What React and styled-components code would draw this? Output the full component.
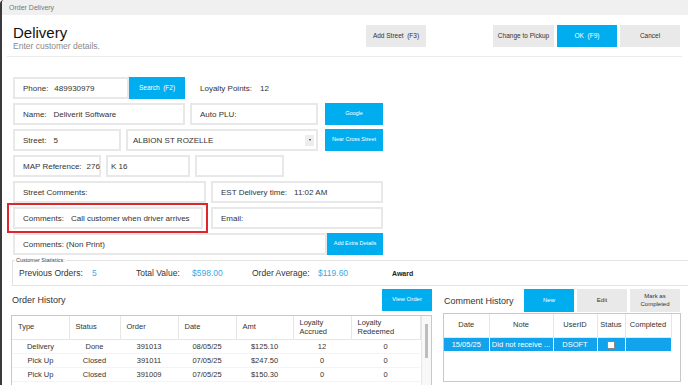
import React from 'react';
import styled, { createGlobalStyle } from 'styled-components';

const BLUE = '#00aeef';

const Global = createGlobalStyle`
  html, body { margin: 0; padding: 0; background: #fff; overflow: hidden; }
  body { font-family: "Liberation Sans", Arial, sans-serif; color: #333; }
  #root { width: 688px; height: 385px; overflow: hidden; }
`;

const Window = styled.div`
  width: 688px;
  height: 385px;
  box-sizing: border-box;
  border-left: 2px solid #3a3a3a;
  border-top-left-radius: 4px;
  overflow: hidden;
  display: flex;
  flex-direction: column;
  background: #fff;
`;

const TitleBar = styled.div`
  height: 15px;
  flex: none;
  background: #f0f0f0;
  padding-left: 7px;
  font-size: 7px;
  line-height: 15px;
  color: #777;
`;

const Header = styled.div`
  box-sizing: border-box;
  height: 42px;
  flex: none;
  margin: 0 6px 0 5px;
  padding: 10px 2px 0 6px;
  border-bottom: 1px solid #ececec;
  display: flex;
  align-items: flex-start;
`;

const TitleBlock = styled.div`
  flex: 1;
`;

const Heading = styled.div`
  font-size: 15px;
  line-height: 15px;
  color: #111;
`;

const Sub = styled.div`
  margin-top: 1px;
  font-size: 8.5px;
  line-height: 10px;
  color: #8a8a8a;
`;

const ButtonGroup = styled.div`
  display: flex;
  gap: ${p => p.$gap ?? 3}px;
  margin-right: ${p => p.$mr || 0}px;
`;

const Btn = styled.button`
  box-sizing: border-box;
  width: ${p => p.$w}px;
  height: ${p => p.$h || 22}px;
  flex: none;
  border: none;
  margin: 0;
  padding: 0 2px;
  font-family: inherit;
  font-size: ${p => p.$fs || 6.5}px;
  line-height: 1.3;
  background: ${p => (p.$blue ? BLUE : '#e9e9e9')};
  color: ${p => (p.$blue ? '#fff' : '#333')};
`;

const Body = styled.div`
  padding: 20px 0 0 11px;
  display: flex;
  flex-direction: column;
`;

const Form = styled.div`
  display: flex;
  flex-direction: column;
  gap: 4px;
`;

const Row = styled.div`
  display: flex;
  align-items: center;
  height: 22px;
  gap: ${p => p.$gap ?? 5}px;
`;

const Field = styled.div`
  box-sizing: border-box;
  width: ${p => p.$w}px;
  height: 22px;
  flex: none;
  border: 2px solid #e8e8e8;
  display: flex;
  align-items: center;
  padding-left: ${p => p.$pl ?? 8}px;
  padding-right: 2px;
  font-size: 8px;
  color: #333;
  white-space: nowrap;
  background: #fff;
`;

const Value = styled.span`
  margin-left: ${p => p.$ml ?? 6}px;
`;

const Arrow = styled.div`
  margin-left: auto;
  width: 9px;
  height: 11px;
  background: #ededed;
  display: flex;
  align-items: center;
  justify-content: center;
  &::after {
    content: '';
    border-left: 1.5px solid transparent;
    border-right: 1.5px solid transparent;
    border-top: 2px solid #333;
  }
`;

const Loyalty = styled.div`
  margin-left: 15px;
  font-size: 8px;
`;

const RedFrame = styled.div`
  box-sizing: border-box;
  width: 201px;
  height: 30px;
  margin: -4px 0 -4px -6px;
  border: 2px solid #e0262a;
  display: flex;
  align-items: center;
  padding-left: 4px;
`;

const Stats = styled.fieldset`
  margin: 2px -20px 0 -1px;
  padding: 3px 0 5px 6px;
  border: 1px solid #e3e3e3;
  min-width: 0;
`;

const Legend = styled.legend`
  font-size: 5.5px;
  line-height: 7px;
  padding: 0 1px;
  margin-left: -4px;
  color: #444;
`;

const StatsRow = styled.div`
  display: flex;
  align-items: baseline;
  font-size: 8.5px;
  line-height: 12px;
`;

const StatGroup = styled.div`
  width: ${p => p.$w}px;
  flex: none;
  display: flex;
  align-items: baseline;
`;

const StatLabel = styled.span`
  width: ${p => p.$w}px;
  flex: none;
  color: #333;
`;

const StatValue = styled.span`
  color: #3aa9e6;
`;

const Award = styled.span`
  font-size: 7px;
  font-weight: bold;
  color: #222;
`;

const Bottom = styled.div`
  display: flex;
  gap: 11px;
  margin: 3px 0 0 -2px;
`;

const Panel = styled.div`
  width: ${p => p.$w}px;
  flex: none;
  display: flex;
  flex-direction: column;
  gap: ${p => p.$gap ?? 3}px;
`;

const PanelHead = styled.div`
  display: flex;
  align-items: center;
  justify-content: space-between;
  padding: 0 ${p => p.$pr ?? 0}px 0 1px;
`;

const PanelTitle = styled.div`
  font-size: 9px;
  color: #333;
`;

const TableBox = styled.div`
  box-sizing: border-box;
  height: ${p => p.$h}px;
  border: 1px solid #c8c8c8;
  display: flex;
  overflow: hidden;
`;

const TableArea = styled.div`
  flex: 1;
`;

const Table = styled.table`
  table-layout: fixed;
  border-collapse: collapse;
  width: ${p => p.$w}px;
  font-size: 7.5px;
  color: #333;
`;

const Col = styled.col`
  width: ${p => p.$w}px;
`;

const Th = styled.th`
  height: 23px;
  padding: 0 0 0 ${p => p.$pl ?? 6}px;
  font-weight: normal;
  font-size: 7.5px;
  line-height: 8.5px;
  text-align: ${p => p.$center ? 'center' : 'left'};
  border-right: 1px solid #e6e6e6;
  border-bottom: 1px solid #e6e6e6;
  overflow: hidden;
`;

const Td = styled.td`
  height: 13px;
  padding: 0;
  text-align: center;
  white-space: nowrap;
  overflow: hidden;
  border-bottom: 1px solid #f4f4f4;
`;

const SelRow = styled.tr`
  background: #11a4ec;
  color: #fff;
  & > td {
    border-right: 1px solid #fff;
    border-bottom: none;
  }
`;

const Check = styled.span`
  display: inline-block;
  width: 6px;
  height: 6px;
  background: #fff;
  border: 1px solid #888;
  vertical-align: middle;
`;

const Scroll = styled.div`
  width: 10px;
  flex: none;
  border-left: 1px solid #e6e6e6;
  background: #f8f8f8;
  display: flex;
  justify-content: center;
  padding-top: 8px;
  box-sizing: border-box;
`;

const Thumb = styled.div`
  width: 3px;
  height: 34px;
  background: #bdbdbd;
`;

const orders = [
  ['Delivery', 'Done', '391013', '08/05/25', '$125.10', '12', '0'],
  ['Pick Up', 'Closed', '391011', '07/05/25', '$247.50', '0', '0'],
  ['Pick Up', 'Closed', '391009', '07/05/25', '$150.30', '0', '0'],
  ['Pick Up', 'Closed', '390970', '04/11/24', '$54.00', '0', '0'],
  ['Pick Up', 'Closed', '390912', '02/11/24', '$61.20', '0', '0'],
];

export default function App() {
  return (
    <Window>
      <Global />
      <TitleBar>Order Delivery</TitleBar>
      <Header>
        <TitleBlock>
          <Heading>Delivery</Heading>
          <Sub>Enter customer details.</Sub>
        </TitleBlock>
        <ButtonGroup $mr={67}>
          <Btn $w={60}>Add Street&nbsp; (F3)</Btn>
        </ButtonGroup>
        <ButtonGroup $gap={3}>
          <Btn $w={61}>Change to Pickup</Btn>
          <Btn $w={60} $blue>OK&nbsp; (F9)</Btn>
          <Btn $w={60}>Cancel</Btn>
        </ButtonGroup>
      </Header>
      <Body>
        <Form>
          <Row $gap={0}>
            <Field $w={116}>Phone:<Value>489930979</Value></Field>
            <Btn $w={56} $blue>Search&nbsp; (F2)</Btn>
            <Loyalty>Loyalty Points:<Value $ml={8}>12</Value></Loyalty>
          </Row>
          <Row>
            <Field $w={172}>Name:<Value $ml={7}>Deliverit Software</Value></Field>
            <Field $w={128}>Auto PLU:</Field>
            <Btn $w={58} $blue $fs={5.5} style={{ marginLeft: 2 }}>Google</Btn>
          </Row>
          <Row>
            <Field $w={108}>Street:<Value $ml={7}>5</Value></Field>
            <Field $w={192} $pl={5}>ALBION ST ROZELLE<Arrow /></Field>
            <Btn $w={58} $blue $fs={5.5} style={{ marginLeft: 2 }}>Near Cross Street</Btn>
          </Row>
          <Row>
            <Field $w={88}>MAP Reference:<Value $ml={5}>276</Value></Field>
            <Field $w={84} $pl={3}>K 16</Field>
            <Field $w={89} />
          </Row>
          <Row>
            <Field $w={193}>Street Comments:</Field>
            <Field $w={172}>EST Delivery time:<Value $ml={7}>11:02 AM</Value></Field>
          </Row>
          <Row $gap={3}>
            <RedFrame>
              <Field $w={190}>Comments:<Value $ml={7}>Call customer when driver arrives</Value></Field>
            </RedFrame>
            <Field $w={172}>Email:</Field>
          </Row>
          <Row $gap={0}>
            <Field $w={314}>Comments: (Non Print)</Field>
            <Btn $w={56} $blue $fs={5.5}>Add Extra Details</Btn>
          </Row>
        </Form>
        <Stats>
          <Legend>Customer Statistics:</Legend>
          <StatsRow>
            <StatGroup $w={117}>
              <StatLabel $w={73}>Previous Orders:</StatLabel>
              <StatValue>5</StatValue>
            </StatGroup>
            <StatGroup $w={116}>
              <StatLabel $w={56}>Total Value:</StatLabel>
              <StatValue>$598.00</StatValue>
            </StatGroup>
            <StatGroup $w={140}>
              <StatLabel $w={66}>Order Average:</StatLabel>
              <StatValue>$119.60</StatValue>
            </StatGroup>
            <Award>Award</Award>
          </StatsRow>
        </Stats>
        <Bottom>
          <Panel $w={421} $gap={4}>
            <PanelHead>
              <PanelTitle>Order History</PanelTitle>
              <Btn $w={50} $blue $fs={6}>View Order</Btn>
            </PanelHead>
            <TableBox $h={90}>
              <TableArea>
                <Table $w={408}>
                  <colgroup>
                    <Col $w={57} /><Col $w={51} /><Col $w={58} /><Col $w={58} />
                    <Col $w={57} /><Col $w={58} /><Col $w={69} />
                  </colgroup>
                  <thead>
                    <tr>
                      <Th>Type</Th>
                      <Th>Status</Th>
                      <Th>Order</Th>
                      <Th>Date</Th>
                      <Th>Amt</Th>
                      <Th>Loyalty<br />Accrued</Th>
                      <Th>Loyalty<br />Redeemed</Th>
                    </tr>
                  </thead>
                  <tbody>
                    {orders.map((r, i) => (
                      <tr key={i}>
                        {r.map((c, j) => <Td key={j}>{c}</Td>)}
                      </tr>
                    ))}
                  </tbody>
                </Table>
              </TableArea>
              <Scroll><Thumb /></Scroll>
            </TableBox>
          </Panel>
          <Panel $w={238} $gap={1}>
            <PanelHead $pr={1}>
              <PanelTitle>Comment History</PanelTitle>
              <ButtonGroup $gap={3}>
                <Btn $w={50} $h={23} $blue $fs={6}>New</Btn>
                <Btn $w={50} $h={23} $fs={6}>Edit</Btn>
                <Btn $w={50} $h={23} $fs={6}>Mark as<br />Completed</Btn>
              </ButtonGroup>
            </PanelHead>
            <TableBox $h={69}>
              <TableArea>
                <Table $w={227}>
                  <colgroup>
                    <Col $w={45} /><Col $w={64} /><Col $w={44} /><Col $w={28} /><Col $w={46} />
                  </colgroup>
                  <thead>
                    <tr>
                      <Th $pl={0} $center>Date</Th>
                      <Th $pl={0} $center>Note</Th>
                      <Th $pl={0} $center>UserID</Th>
                      <Th $pl={0} $center>Status</Th>
                      <Th $pl={0} $center>Completed</Th>
                    </tr>
                  </thead>
                  <tbody>
                    <SelRow>
                      <Td>15/05/25</Td>
                      <Td>Did not receive ...</Td>
                      <Td>DSOFT</Td>
                      <Td><Check /></Td>
                      <Td />
                    </SelRow>
                  </tbody>
                </Table>
              </TableArea>
            </TableBox>
          </Panel>
        </Bottom>
      </Body>
    </Window>
  );
}
